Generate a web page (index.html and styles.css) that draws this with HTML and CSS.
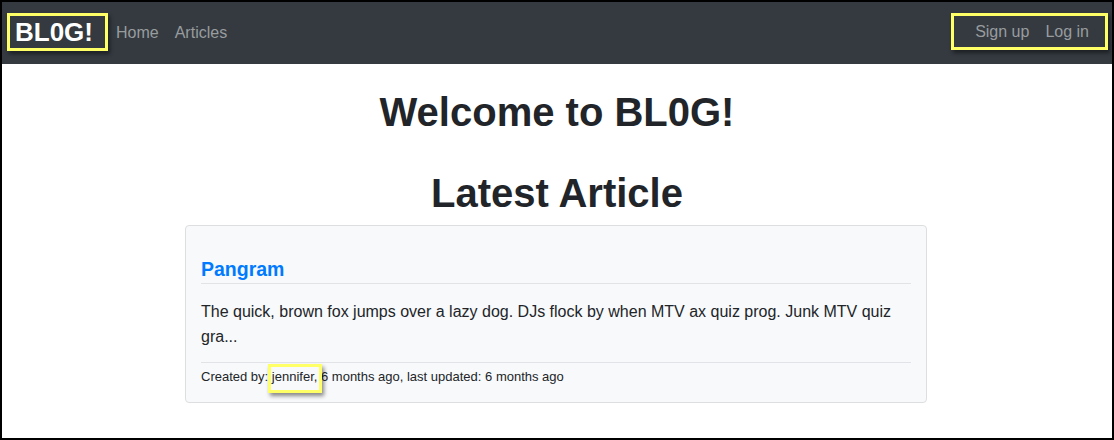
FILE: index.html
```html
<!DOCTYPE html>
<html lang="en">
<head>
<meta charset="utf-8">
<title>BL0G!</title>
<link rel="stylesheet" href="styles.css">
</head>
<body>
<div class="frame">
  <nav class="navbar">
    <div class="nav-left">
      <a class="brand hl" href="#">BL0G!</a>
      <a class="nav-link" href="#">Home</a>
      <a class="nav-link" href="#">Articles</a>
    </div>
    <div class="nav-right hl">
      <a class="nav-link" href="#">Sign up</a>
      <a class="nav-link" href="#">Log in</a>
    </div>
  </nav>
  <main class="main">
    <h1 class="title">Welcome to BL0G!</h1>
    <h1 class="title title-second">Latest Article</h1>
    <article class="card">
      <h5 class="card-title"><a href="#">Pangram</a></h5>
      <p class="card-text">The quick, brown fox jumps over a lazy dog. DJs flock by when MTV ax quiz prog. Junk MTV quiz gra...</p>
      <div class="card-meta">Created by: <span class="author">jennifer, </span>6 months ago, last updated: 6 months ago</div>
    </article>
  </main>
</div>
</body>
</html>
```

FILE: styles.css
```css
* { box-sizing: border-box; }
html, body { margin: 0; padding: 0; }
body {
  font-family: "Liberation Sans", Arial, sans-serif;
  color: #212529;
  background: #fff;
}
a { text-decoration: none; }
.frame {
  width: 1114px;
  height: 440px;
  border: 2px solid #000;
  overflow: hidden;
}
.navbar {
  height: 62px;
  background: #343a40;
  display: flex;
  align-items: center;
  justify-content: space-between;
  padding: 0 4px 0 5px;
}
.nav-left, .nav-right {
  display: flex;
  align-items: center;
}
.hl {
  border: 3px solid #ffff66;
  box-shadow: 2px 3px 4px rgba(0, 0, 0, 0.45);
}
.brand {
  color: #fff;
  font-weight: bold;
  font-size: 26px;
  line-height: 32px;
  padding: 0 12px 0 5px;
  margin-top: -3px;
}
.nav-link {
  color: #999c9f;
  font-size: 16px;
  line-height: 24px;
  padding: 0 8px;
}
.nav-right {
  height: 37px;
  padding: 0 8px 0 13px;
  margin-top: -3px;
}
.main {
  padding-top: 24px;
}
.title {
  margin: 0 0 8px;
  text-align: center;
  font-size: 40px;
  line-height: 48px;
  font-weight: bold;
}
.title-second {
  margin-top: 33px;
}
.card {
  width: 742px;
  margin-left: 183px;
  background: #f8f9fa;
  border: 1px solid #dcdee0;
  border-radius: 4px;
  padding: 31px 15px 15px;
}
.card-title {
  margin: 0;
  font-size: 19.5px;
  line-height: 24px;
  font-weight: bold;
  padding-bottom: 2px;
  border-bottom: 1px solid #e1e3e6;
}
.card-title a { color: #007bff; }
.card-text {
  margin: 0;
  padding: 15px 0 13px;
  font-size: 16px;
  line-height: 25px;
  border-bottom: 1px solid #e1e3e6;
}
.card-meta {
  font-size: 13px;
  line-height: 20px;
  padding-top: 4px;
}
.author {
  position: relative;
}
.author::after {
  content: "";
  position: absolute;
  left: -4px;
  right: -1px;
  top: -5px;
  bottom: -9px;
  border: 3px solid #ffff66;
  box-shadow: 2px 3px 4px rgba(0, 0, 0, 0.45);
}
```
